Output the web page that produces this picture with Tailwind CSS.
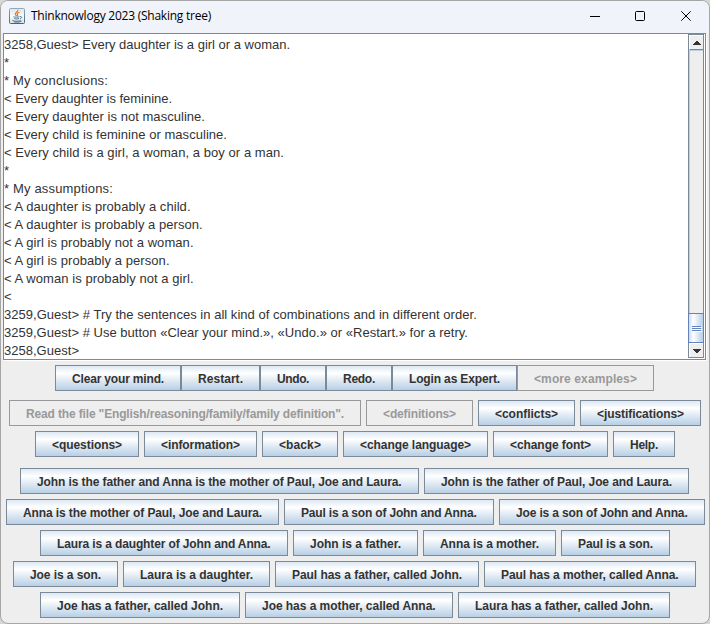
<!DOCTYPE html>
<html lang="en">
<head>
<meta charset="utf-8">
<title>Thinknowlogy 2023 (Shaking tree)</title>
<script src="https://cdn.jsdelivr.net/npm/@tailwindcss/browser@4"></script>
</head>
<body class="bg-[#d6d6d6] overflow-hidden">
<div class="w-[710px] h-[624px] flex flex-col rounded-[8px] border border-[#a6a6a6] bg-[#eeeeee] overflow-hidden text-[#333333]">
  <header class="h-8 shrink-0 bg-[#f0f3f9] flex items-center text-black">
    <svg class="ml-2 -mt-[3px]" width="16" height="16" viewBox="0 0 16 16">
      <defs><linearGradient id="jb" x2="0" y2="1"><stop offset="0" stop-color="#8ea9bd"/><stop offset="1" stop-color="#456680"/></linearGradient>
      <linearGradient id="jf" x2="0" y2="1"><stop offset="0" stop-color="#dfe5e9"/><stop offset=".5" stop-color="#fafafa"/><stop offset="1" stop-color="#d9e0e5"/></linearGradient></defs>
      <rect x=".5" y=".5" width="15" height="15" rx="1" fill="url(#jf)" stroke="url(#jb)"/>
      <path d="M8.8 1.8C9.4 4 5.2 4.6 6.4 6.6L7.5 8M10.5 4.2C7.8 5.2 7.8 6 8.7 7.1L8.1 8.2" fill="none" stroke="#e87722" stroke-width="1.2"/>
      <path d="M4.5 8.7C5.5 9.4 9 9.3 10.5 8.7M5.3 10.5C6.5 11.2 9 11.1 10 10.5M11 8.7c2-.7 2.3 1.4.1 2.2M3.8 12c-1.5 1.3 6.4 1.8 8 .3M5 13.9c2.5.4 6 .3 7.5-.7" fill="none" stroke="#4e7896"/>
    </svg>
    <span class="ml-[6px] -mt-[2px] font-['Open_Sans',sans-serif] text-[12px] whitespace-pre" data-w="180" data-font="12px 'Open Sans'">Thinknowlogy 2023 (Shaking tree)</span>
    <svg class="ml-auto mr-[17px] -mt-[3px]" width="102" height="12" viewBox="0 0 102 12" fill="none" stroke="#000">
      <path d="M0 6.5h10"/><rect x="45.5" y="1.5" width="9" height="9" rx="1"/><path d="M91.3 1.3l9.4 9.4M100.7 1.3l-9.4 9.4"/>
    </svg>
  </header>

  <main class="mx-[2px] w-[703px] h-[327px] shrink-0 border border-[#7a8a99] bg-white flex justify-between shadow-[1px_1px_0_#ffffff]">
    <div id="log" class="font-['Liberation_Sans',Arial,sans-serif] text-[13px] leading-[18px] pt-[2px] whitespace-pre"></div>
    <div class="w-[16px] mr-px h-[324px] border border-[#7a8a99] bg-[#eeeeee] flex flex-col shadow-[inset_1px_0_0_#b8cfe5]">
      <div class="h-[15px] shrink-0 border-b border-b-[#7a8a99] border-t border-t-white border-l border-l-white bg-[#eeeeee] shadow-[0_1px_0_#b8cfe5] flex items-center justify-center">
        <svg width="8" height="4" viewBox="0 0 8 4" shape-rendering="crispEdges"><path d="M3 0h2v1h1v1h1v1h1v1H0V3h1V2h1V1h1z" fill="#333"/></svg>
      </div>
      <div class="h-[30px] mt-[263px] -mx-px shrink-0 border border-[#6382bf] bg-linear-to-r from-[#c8ddf2] via-white via-30% to-[#b8cfe5] flex flex-col items-center justify-center gap-px">
        <i class="w-[9px] h-px bg-[#6382bf] shadow-[1px_1px_0_white]"></i><i class="w-[9px] h-px bg-[#6382bf] shadow-[1px_1px_0_white]"></i><i class="w-[9px] h-px bg-[#6382bf] shadow-[1px_1px_0_white]"></i>
      </div>
      <div class="grow border-t border-l border-white flex items-center justify-center">
        <svg width="8" height="4" viewBox="0 0 8 4" shape-rendering="crispEdges"><path d="M0 0h8v1H7v1H6v1H5v1H3V3H2V2H1V1H0z" fill="#333"/></svg>
      </div>
    </div>
  </main>

  <footer id="panel" class="flex flex-col font-['Liberation_Sans',Arial,sans-serif] text-[12px] font-bold leading-[24px]"></footer>
</div>
<script>
  // Log lines with their rendered width in pixels
  const log = [
    ["3258,Guest> Every daughter is a girl or a woman.", 286], ["*"], ["* My conclusions:", 104],
    ["< Every daughter is feminine.", 168], ["< Every daughter is not masculine.", 201],
    ["< Every child is feminine or masculine.", 223], ["< Every child is a girl, a woman, a boy or a man.", 280],
    ["*"], ["* My assumptions:", 109], ["< A daughter is probably a child.", 188],
    ["< A daughter is probably a person.", 200], ["< A girl is probably not a woman.", 191],
    ["< A girl is probably a person.", 167], ["< A woman is probably not a girl.", 191], ["<"],
    ["3259,Guest> # Try the sentences in all kind of combinations and in different order.", 473],
    ["3259,Guest> # Use button «Clear your mind.», «Undo.» or «Restart.» for a retry.", 464],
    ["3258,Guest>", 75]
  ];
  for (const [t, w] of log) {
    const row = document.createElement("div"), s = document.createElement("span");
    row.className = "h-[18px]";
    s.textContent = t;
    if (w) s.dataset.w = w;
    s.dataset.font = "13px 'Liberation Sans'";
    row.append(s);
    document.getElementById("log").append(row);
  }
  // Button rows: [row classes, left offset, [label, width, disabled]...]
  const rows = [
    ["mt-[5px] gap-0", 54, ["Clear your mind.", 126], ["Restart.", 79], ["Undo.", 66], ["Redo.", 66], ["Login as Expert.", 125], ["<more examples>", 137, 1]],
    ["mt-[9px] gap-[5px]", 8, ["Read the file \"English/reasoning/family/family definition\".", 352, 1], ["<definitions>", 107, 1], ["<conflicts>", 97], ["<justifications>", 121]],
    ["mt-[5px] gap-[5px]", 34, ["<questions>", 104], ["<information>", 113], ["<back>", 76], ["<change language>", 145], ["<change font>", 115], ["Help.", 62]],
    ["mt-[11px] gap-[5px]", 19, ["John is the father and Anna is the mother of Paul, Joe and Laura.", 399], ["John is the father of Paul, Joe and Laura.", 265]],
    ["mt-[5px] gap-[5px]", 5, ["Anna is the mother of Paul, Joe and Laura.", 273], ["Paul is a son of John and Anna.", 210], ["Joe is a son of John and Anna.", 206]],
    ["mt-[5px] gap-[5px]", 39, ["Laura is a daughter of John and Anna.", 248], ["John is a father.", 125], ["Anna is a mother.", 133], ["Paul is a son.", 109]],
    ["mt-[5px] gap-[5px]", 12, ["Joe is a son.", 105], ["Laura is a daughter.", 147], ["Paul has a father, called John.", 204], ["Paul has a mother, called Anna.", 212]],
    ["mt-[5px] gap-[5px]", 39, ["Joe has a father, called John.", 200], ["Joe has a mother, called Anna.", 208], ["Laura has a father, called John.", 212]]
  ];
  for (const [cls, left, ...items] of rows) {
    const r = document.createElement("div");
    r.className = "flex " + cls;
    r.style.paddingLeft = left + "px";
    for (const [t, w, off] of items) {
      const b = document.createElement("button"), s = document.createElement("span");
      b.className = off
        ? "h-[26px] shrink-0 border border-[#999999] text-[#999999] text-left pl-[16px] pt-px whitespace-pre"
        : "h-[26px] shrink-0 border border-[#7a8a99] bg-linear-to-b from-[#dde8f3] via-white via-30% to-[#b8cfe5] text-left pl-[16px] pt-px whitespace-pre";
      b.style.width = w + "px";
      s.textContent = t;
      s.dataset.w = w - 34;
      s.dataset.font = "bold 12px 'Liberation Sans'";
      b.append(s);
      r.append(b);
    }
    document.getElementById("panel").append(r);
  }
  // Spread each label's letters over its intended width
  const ctx = document.createElement("canvas").getContext("2d");
  for (const s of document.querySelectorAll("[data-w]")) {
    ctx.font = s.dataset.font;
    s.style.letterSpacing = (s.dataset.w - ctx.measureText(s.textContent).width) / s.textContent.length + "px";
  }
</script>
</body>
</html>
